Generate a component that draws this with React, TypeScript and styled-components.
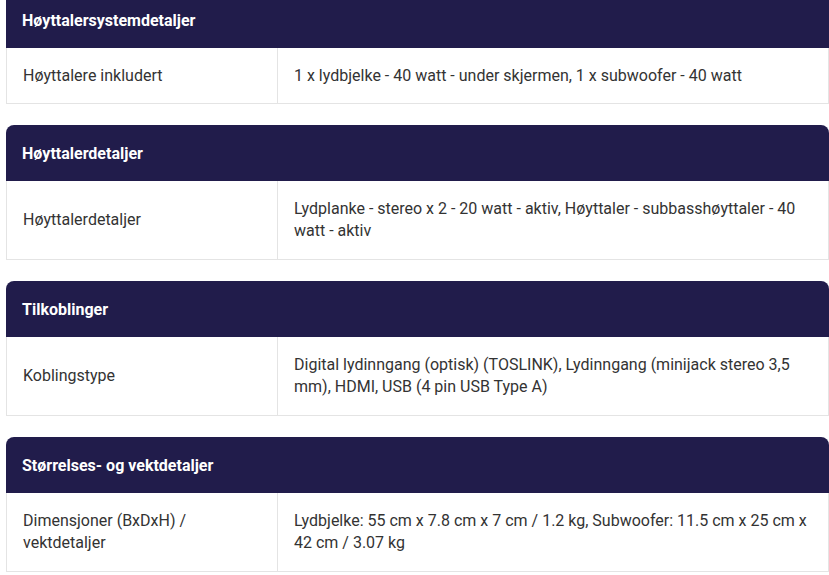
import React from 'react';
import styled, { createGlobalStyle } from 'styled-components';

const GlobalStyle = createGlobalStyle`
  body {
    margin: 0;
    background: #ffffff;
    font-family: Roboto, 'Liberation Sans', sans-serif;
    color: #333333;
    overflow: hidden;
  }
`;

const Page = styled.div`
  padding-left: 6px;
  margin-top: -8px;
`;

const Section = styled.section`
  width: 823px;
  margin-bottom: 21px;
`;

const SectionHeader = styled.div`
  height: 56px;
  display: flex;
  align-items: center;
  padding: 0 16px;
  background-color: #211c4b;
  color: #ffffff;
  font-size: 16px;
  font-weight: 700;
  border-radius: 8px 8px 0 0;
`;

const Row = styled.div`
  display: grid;
  grid-template-columns: 270px 1fr;
  border: 1px solid #e4e4e4;
  border-top: none;
`;

const Cell = styled.div<{ $divider?: boolean }>`
  padding: 16.5px 16px;
  font-size: 16px;
  line-height: 22.4px;
  display: flex;
  align-items: center;
  border-left: ${(p) => (p.$divider ? '1px solid #e4e4e4' : 'none')};
`;

const sections = [
  {
    title: 'Høyttalersystemdetaljer',
    label: 'Høyttalere inkludert',
    value: '1 x lydbjelke - 40 watt - under skjermen, 1 x subwoofer - 40 watt',
  },
  {
    title: 'Høyttalerdetaljer',
    label: 'Høyttalerdetaljer',
    value:
      'Lydplanke - stereo x 2 - 20 watt - aktiv, Høyttaler - subbasshøyttaler - 40 watt - aktiv',
  },
  {
    title: 'Tilkoblinger',
    label: 'Koblingstype',
    value:
      'Digital lydinngang (optisk) (TOSLINK), Lydinngang (minijack stereo 3,5 mm), HDMI, USB (4 pin USB Type A)',
  },
  {
    title: 'Størrelses- og vektdetaljer',
    label: 'Dimensjoner (BxDxH) / vektdetaljer',
    value: 'Lydbjelke: 55 cm x 7.8 cm x 7 cm / 1.2 kg, Subwoofer: 11.5 cm x 25 cm x 42 cm / 3.07 kg',
  },
];

export default function App() {
  return (
    <>
      <GlobalStyle />
      <Page>
        {sections.map((s) => (
          <Section key={s.title}>
            <SectionHeader>{s.title}</SectionHeader>
            <Row>
              <Cell>{s.label}</Cell>
              <Cell $divider>{s.value}</Cell>
            </Row>
          </Section>
        ))}
      </Page>
    </>
  );
}
